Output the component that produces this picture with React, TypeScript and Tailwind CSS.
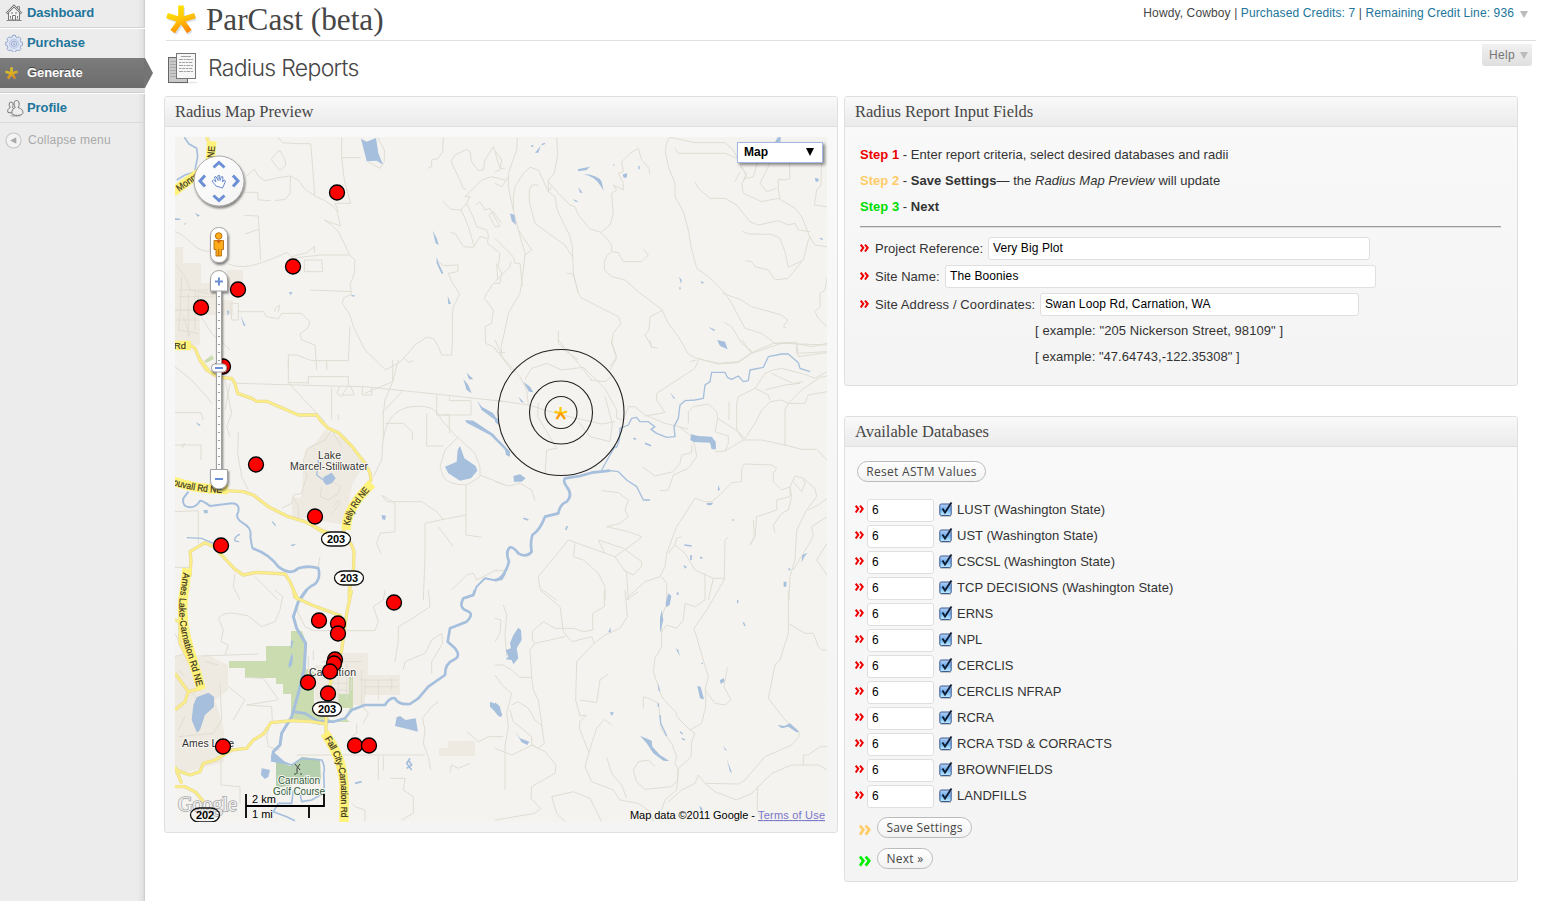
import React from "react";

const SANS = "font-['Liberation_Sans',Arial,sans-serif]";
const SERIF = "font-['Liberation_Serif',Georgia,serif]";

function Star({ id, className }: { id: string; className?: string }) {
  return (
    <svg viewBox="0 0 30 30" className={className}>
      <defs>
        <linearGradient id={id} gradientUnits="userSpaceOnUse" x1="6" y1="2" x2="16" y2="28">
          <stop offset="0" stopColor="#ffe600" />
          <stop offset="0.5" stopColor="#ffc60a" />
          <stop offset="1" stopColor="#ff8a00" />
        </linearGradient>
      </defs>
      <g transform="translate(1.2 1.4)" stroke="#9fb4cf" strokeOpacity=".4" strokeWidth="5.4">
        <path d="M15 15V1M15 15L1.5 11M15 15L28.5 11M15 15L7 27M15 15L23 27" />
      </g>
      <g stroke={`url(#${id})`} strokeWidth="5.6" fill="none">
        <path d="M15 16V.5M15 15L1 10.600M15 15L29 10.600M15.500 14L6.600 26.600M14.500 14L23.400 26.600" />
      </g>
    </svg>
  );
}

function HouseIcon() {
  return (
    <svg viewBox="0 0 18 18" className="h-[18px] w-[18px]">
      <path d="M3.500 8.500V16h11V8.500L9 3z" fill="#f4f4f4" stroke="#777" strokeWidth="1" />
      <path d="M12.500 2.500h2v4l-2-2z" fill="#ddd" stroke="#777" strokeWidth=".8" />
      <path d="M1.500 9.500L9 2l7.500 7.500" fill="none" stroke="#777" strokeWidth="2.400" />
      <path d="M1.500 9.500L9 2l7.500 7.500" fill="none" stroke="#eee" strokeWidth=".8" />
      <path d="M7.500 16v-4.500h3V16M6 9h2M10 9h2M5.500 12v2.500M12.500 12v2.500" fill="none" stroke="#777" />
      <path d="M1.500 16.500h15" stroke="#888" />
    </svg>
  );
}

function GearIcon() {
  return (
    <svg viewBox="0 0 18 18" className="h-[18px] w-[18px]">
      <g fill="#dfe6f5" stroke="#8d9fc6" strokeWidth=".9">
        <path d="M7.600 1.300h2.800l.5 1.700 1.500.6 1.600-.8 2 2-.8 1.600.6 1.500 1.700.5v2.800l-1.700.5-.6 1.500.8 1.600-2 2-1.600-.8-1.500.6-.5 1.700H7.600l-.5-1.700-1.500-.6-1.600.8-2-2 .8-1.600-.6-1.500-1.500-.5V8.400l1.500-.5.6-1.500L2 4.800l2-2 1.600.8 1.500-.6z" />
        <circle cx="9" cy="9.700" r="4.600" fill="#d3ddf2" stroke="#b4c2e2" />
        <circle cx="9" cy="9.700" r="2.600" fill="#eef2fb" />
        <circle cx="9" cy="9.700" r="1" fill="#ccd6ee" strokeWidth=".7" />
      </g>
    </svg>
  );
}

function UsersIcon() {
  return (
    <svg viewBox="0 0 18 18" className="h-[18px] w-[18px]">
      <ellipse cx="9.500" cy="16.800" rx="6" ry=".9" fill="#bbb" />
      <g fill="#ededed" stroke="#777" strokeWidth="1">
        <path d="M2 13.500c-1-2.500.5-4 2.200-5C2.500 6.500 2.800 3 5 3s2.800 3 1.500 5.200L9 12l-3 2z" />
        <path d="M9.300 8.500C7.500 6 7.500 1.500 10.500 1.500S14 6 12 8.500c3.500.8 5.500 3.500 4.800 6C15.500 17 7.500 17 6 14.800c-.8-2.500.8-5.500 3.300-6.300z" />
      </g>
    </svg>
  );
}

function ReportsIcon() {
  return (
    <svg viewBox="0 0 32 32" className="h-[32px] w-[32px]">
      <ellipse cx="17" cy="30.500" rx="14" ry="1" fill="#e6e6e6" />
      <rect x="1.500" y="5.500" width="19" height="25" fill="#c9c9c9" stroke="#666" />
      <path d="M3 9.500h6M3 12.500h6M3 15.500h6M3 18.500h6M3 21.500h6M3 24.500h6" stroke="#aaa" />
      <rect x="9.500" y="1.500" width="19" height="25" fill="#f7f7f7" stroke="#777" />
      <g stroke="#a2a2a2">
        <path d="M14 4.500h10" />
        <path d="M12 7.500h14M12 13.500h14M12 19.500h14" strokeDasharray="4 .7 2 .7" />
        <path d="M12 10.500h14M12 16.500h14" strokeDasharray="2.500 .7 3 .7" />
      </g>
    </svg>
  );
}

function MenuItem({ icon, label, className = "" }: { icon: React.ReactNode; label: string; className?: string }) {
  return (
    <a className={`flex items-center text-[13px] font-bold leading-[18px] tracking-[-0.08px] text-[#21759b] ${className}`}>
      <span className="flex w-[27px] shrink-0 items-center pl-[5px]">{icon}</span>
      <span>{label}</span>
    </a>
  );
}

function Sidebar() {
  return (
    <nav className="flex h-[901px] w-[145px] shrink-0 flex-col bg-[linear-gradient(to_right,#ececec_0,#ececec_137px,#e2e2e2_143px,#c8c8c8_145px)]">
      <MenuItem icon={<HouseIcon />} label="Dashboard" className="h-[28px] border-b border-[#d3d3d3] pb-[2px]" />
      <MenuItem icon={<GearIcon />} label="Purchase" className="h-[30px] border-t border-white pb-[2px]" />
      <div className="relative flex h-[30px] items-center bg-gradient-to-b from-[#7c7c7c] to-[#6c6c6c]">
        <span className="flex w-[27px] pl-[5px]">
          <Star id="starSmall" className="h-[13px] w-[13px] opacity-75" />
        </span>
        <span className="text-[13px] font-bold leading-[18px] tracking-[-0.1px] text-white [text-shadow:0_-1px_0_#444]">Generate</span>
        <svg viewBox="0 0 9 30" className="absolute left-[144px] top-0 h-[30px] w-[9px]">
          <path d="M0 0h1l8 15-8 15H0z" fill="#747474" />
        </svg>
      </div>
      <div className="h-[5px] border-b border-[#cfcfcf] bg-[#dfdfdf]" />
      <MenuItem icon={<UsersIcon />} label="Profile" className="h-[30px] border-b border-b-[#dadada] border-t border-t-white [&>span:first-child]:pl-[6px]" />
      <div className="flex h-[34px] items-center text-[12px] tracking-[0.22px] text-[#aaa]">
        <span className="flex w-[28px] pl-[5px]">
          <svg viewBox="0 0 18 18" className="h-[17px] w-[17px]">
            <circle cx="9" cy="9" r="8" fill="#f3f3f3" stroke="#c6c6c6" strokeWidth="1.200" />
            <path d="M12 5.500v7L5.500 9z" fill="#aaa" />
          </svg>
        </span>
        Collapse menu
      </div>
    </nav>
  );
}

function Panel({ title, className = "", children }: { title: string; className?: string; children: React.ReactNode }) {
  return (
    <section className={`w-[674px] shrink-0 overflow-hidden rounded-[3px] border border-[#dfdfdf] bg-gradient-to-b from-[#f9f9f9] to-[#f4f4f4] ${className}`}>
      <h3 className={`h-[30px] border-b border-[#dfdfdf] bg-gradient-to-b from-[#f9f9f9] to-[#ebebeb] pl-[10px] text-[16.5px] leading-[30px] text-[#464646] ${SERIF}`}>
        {title}
      </h3>
      {children}
    </section>
  );
}

const Tile = ({ x, y, d }: { x: number; y: number; d: string }) => (
  <path d={d} transform={`translate(${x} ${y}) scale(.33333)`} />
);

const ROADS: [number, number, string][] = [
  [165, 130, `M340,22L352,38 395,41 437,41 443,110 449,195M318,88L335,68 345,62 360,90 362,105 345,122 318,88M245,138L268,118 280,138 300,152 340,143 375,138 400,150 420,178 450,198 480,212 505,230 515,242 527,288 505,280 478,270 500,285 520,305 540,345 553,373 570,390 568,430 555,465 560,492 535,505 532,520 555,555 565,590 600,660 662,720M377,138L375,190 362,208 330,212
M530,22V83H588M530,83L538,150 557,220H510L520,245M638,22L658,60 658,95 645,115 608,95M835,22L833,65 820,85 800,90 800,110 790,115M1020,115L1005,115 985,50 960,90 955,120 940,122 920,95 915,65 905,58 870,75 858,95 880,140 895,175 905,178M833,213L858,238 888,240 905,220 925,262 935,290 965,300 970,315 968,340 1005,370 1000,410 1010,430 1005,460 985,460 965,490 958,505 985,540 980,580 960,590 962,640 985,650 1000,668H1020M888,240L900,265 910,290 928,350M857,308L870,310 895,350 925,352 945,320 966,325
M905,220L915,200 900,200 950,150 980,140 1020,150M932,225L945,215 960,240 975,235 1005,290 990,290 972,255 985,245 1010,280M820,395L835,407 880,405 878,425 850,430 860,455 884,492 865,530 862,560V640L860,675 830,675 820,650 805,625 785,622 750,645 720,680 700,700 660,720M718,685L730,697 745,692M238,187H278L280,210 318,212M238,256L280,258 287,392M240,312L282,298M190,402Q230,420 290,398T365,367L385,385 420,380 470,375 553,375M418,390L470,390 473,425H418zM380,380L425,368 448,350V368M435,480L560,485M30,305Q50,310 80,340T140,362
M220,545H295L305,560 340,566 350,550 410,550 435,575 430,592 405,612 410,630 450,645 455,720M370,720V675H395L440,692H550L555,590M330,545L330,535 345,525 340,545M197,520H220V570H200zM30,400L60,440 75,480 130,490M40,480H130M40,500H150M30,540H100M50,440L45,560 40,600M70,490V620M90,480V600M30,570H100M40,600L100,610M55,560L75,620M108,560L140,610 175,640 195,660M100,490V540H30`],
  [165, 360, `M30,20L80,60 125,110 140,130M30,158H108L115,180M215,70L500,78 600,80 820,103 1020,125M370,0V68L400,100 460,165 480,185M500,178V82M485,30L485,0M430,72V50H550V75L530,110 515,100 525,78M555,75L568,105 530,105M592,80V105H620V83M683,0V65L660,120 655,160V230L650,300 625,350M655,240Q665,150 740,140T830,180L870,225 930,280 945,320V350L905,375Q850,375 835,350L825,320 840,270 880,230M662,190H715L742,215V240M785,160V258H835M815,106V165L853,165V220M853,110V122H918V165H830M945,345L1020,375M903,375V525L950,532
M650,405L665,425H740 770L815,455 835,478 905,465M835,478L780,490V590L775,720M650,405L690,430V515L645,520 635,550 648,582M820,500L850,540 865,560M860,690L905,645 925,640 935,660 990,632H1020M30,455L100,452V550M180,60L200,160 185,200 195,230M195,70L180,150M220,215L218,280 230,350 250,390M30,255H108V300M48,260L60,250 52,265M210,640L205,680 225,720M270,650L310,690 340,720M430,265L480,240 500,210M430,265L415,300 425,350 410,400 385,405 380,430 350,445M500,210L530,260M470,380L465,410 490,420 520,400 525,380 505,365M505,440L520,420 525,430 500,460
M385,410L400,440V475M30,622H75M465,590L460,620 420,625M520,165V180M370,68H430M715,90L650,160M600,100L683,65 700,0`],
  [165, 590, `M160,85Q175,65 210,70L250,78 290,110 330,95 345,60 353,20 330,0M110,198L280,192M395,50L400,70 420,110 445,122H630L640,95 625,50 655,30 660,0M790,0L795,50 735,90 700,110V150L690,215M715,240L720,215 780,190 800,150 830,130 833,160 800,215 800,250M160,85L175,120 168,155 190,165 180,195M240,262L295,265 340,328M245,345L338,330M245,345L320,350 322,395M315,400L305,440 310,470 345,480M395,495H780M790,500L797,540M790,500L775,460 780,420 772,385 800,350 820,335M168,495V585L225,590V640M675,565H720L715,600 745,620V670L710,690M560,640L570,650 600,660 600,695M905,425L940,455 970,440 1015,440M855,548L860,525 880,535 915,520
M640,500V570M655,500V540M430,200V260M445,180V210M470,215H590M500,240H560V300M520,220V330M545,220V330M500,260H580M500,280H560M510,300H560M580,270H700M600,265V320M640,270V330M680,265V300M600,290H700M590,240V350M575,400V430L560,440M590,345L610,370 595,400M30,130L60,190 30,200M120,215L160,225M30,255L100,330M165,280L170,390 145,430 40,440M60,380L40,420M40,240L60,260M190,290L240,330 205,390`],
  [495, 130, `M67,22L65,60 40,130V170L50,220 70,300 90,370 85,420 75,490 40,550 30,600 18,650 20,668M185,22L188,75 178,130 160,150V185L180,200 187,240 225,320 232,350 235,430 250,490 258,503 330,540 370,560 378,580 355,610 350,640 365,685 345,720M160,155L190,190 225,225 240,230 250,255 285,297 318,307 330,320 350,345V365L335,378 328,395V420L350,440 390,450 430,485 460,508 500,538 520,580 550,620 580,672 605,685 670,700 730,695 770,668 835,640 900,640 950,650 996,640M55,240L55,200 60,170 85,130 105,112 130,120 160,185 170,170M130,165L110,165 103,180V215L120,280 160,310 210,345 235,385M318,307L345,285 355,250 350,190 365,180 355,165 385,180 385,160 370,130 385,125 380,95 405,70 430,55 440,90 462,115 465,133
M350,365L370,368 385,395 440,395 460,375 445,357M215,430L235,432 250,490M505,540L465,560 462,600 450,615 470,650 488,655M70,300L110,360 90,375M0,325L55,380 60,400 75,400 82,470M0,455L45,410 48,395M5,400L8,450M0,62L20,90 15,120 0,125M0,160L20,170 40,140M525,22Q510,40 512,70L520,110 540,160V200L565,245 580,300 588,350 605,415 640,440 690,490 710,520 750,595 800,610 840,640 905,636M525,22L600,38 690,38 715,60 735,100 755,140 740,160 745,190 800,215 850,205 900,235 920,260 945,322 960,345 996,350
M540,55L550,70H690L725,85M755,145L775,140 790,90M883,90L885,145 870,150 850,148 850,180 855,205M800,165L795,160 830,90M800,165L815,185 845,175M600,155L610,175 645,205H690L725,225 765,275 790,285 850,272 880,285 900,280 910,300 945,305M743,303L760,312 830,313 855,325 870,365 880,412 925,390 940,330 945,322M750,392L770,395 780,410 820,420 840,450 880,445 920,395M980,80L978,165 965,180 958,225 996,230M996,445L990,480 975,490V530L960,545 970,565 996,590M682,490L735,508 770,530 860,555 878,570 865,590 875,595M688,577L710,590 740,640 772,665M905,640L910,680 996,668M190,603V640L215,665 250,690M0,655L50,720M735,125L720,155M745,150L755,130 735,110`],
  [495, 340, `M0,0L25,55 75,110 95,150 100,195M90,118L110,85 155,70 200,90 265,82 330,145 365,210V235L385,240 400,200 420,200 450,225 510,250 560,262 580,268M0,180L100,195 200,225 320,252 360,245M285,120L330,125 350,110M190,0L215,30 250,70 290,120M130,190L128,230 185,325 155,330 150,405M250,245L285,290 345,305 352,250 330,170M348,0L365,50 345,80M610,60L600,85 485,160V180L510,218 450,228M465,0L470,25M605,60L585,65M605,55L670,72 730,68 770,40 860,10 996,15M770,40L740,0M905,10V40L996,35
M996,95L960,115 935,105 860,85 835,90 810,100 780,145 730,170 725,190V270L745,300 690,333 660,335M555,262L590,290 600,320 605,350 580,385 535,405 520,450 495,452M590,315V338L560,345 555,370 535,395 480,408 442,380M580,250V215L595,200 640,192 665,215 668,235 730,275 748,295M668,235L660,275 700,288V310L690,333M702,185V240M745,300H800L870,315 920,328 965,328 996,360M748,298L780,250 800,210 825,185 860,180 880,190 870,210V318M880,190L920,150 975,112 996,108M780,145L820,165 825,180M830,100L860,115 895,130 925,125M810,150L870,135 915,130M880,190L930,190 940,165 996,155
M845,385L830,375 748,372 740,385V425L710,428 680,460 650,485H630L600,475 545,560 530,600 515,640 510,680 495,710 450,725 400,770 395,780M845,385L835,400V425L860,450 885,440 885,470 845,480V510L785,530 780,590 765,615M885,440L900,408 925,415 960,445 965,470 935,510 905,570 900,660 885,710 882,780M885,440L890,470 880,510 860,520 835,555 840,578M925,415L930,430 920,455 895,425M996,475L970,495 940,510M996,530L950,560 955,590 925,640 895,690M996,610L965,660 996,705M775,540L778,590 765,615M220,600L130,710 135,745 185,780M220,600L360,650 395,700 400,780M240,610L235,650 265,660 310,700 330,740V780M310,600L385,625 440,665V680L415,705 385,690M310,600L330,640M360,650L430,600 440,590 400,575 335,560 375,550 400,530 390,510 400,480 370,458 320,452M700,590L690,600 688,715 655,715 600,690 570,640 540,615 520,640M630,700V780M655,715L640,780M560,590L545,595 540,615M500,710L515,730V780M0,425L40,438 75,430 110,450 120,482M690,715L670,750M0,690H5M640,655`],
  [495, 590, `M135,0L195,50 205,125 230,155 290,140 297,160 245,215 242,330 255,378 275,375 255,395 253,415 283,490M328,0V50L293,70V120L265,125 235,115H180L145,95 112,125V150L120,160 105,180 110,260 115,300 130,330 148,460 130,475 113,465 50,495 0,475M120,160L210,140M390,0L397,80 375,115 330,135 297,160M397,28L430,5M255,330L305,338 315,270 340,252M25,45L35,75 30,130 35,200M0,85L18,90 15,130 0,155M0,225L25,225 50,240 75,262 110,262M0,255L25,290 50,310 35,370 40,410 30,470 30,600M50,345L70,335 100,355 120,390 143,410M45,360L55,395 110,440 110,465 150,485 183,525 180,550 110,590 108,625 137,655 120,670 0,690M330,390L350,405M330,385L305,415 290,460 270,530 290,575 355,600 375,630 430,640 465,665 475,695M335,502L350,550 380,585 395,625M320,695L285,625 235,605 170,620 185,670 210,695
M515,0V40L500,80V170L480,205 475,245 500,320 545,370V380L585,420 600,430 590,455 588,500 548,538V570L530,590 450,598 425,575 415,540 430,515 460,510 480,530M445,355L445,320 460,325 490,340 500,420 530,460 545,500 540,520 550,538 545,600 510,630 500,660M500,125L515,105 545,115 565,90 570,40 600,50 630,30M670,0L635,60 597,115 640,260 630,300 660,340 690,345 708,330 687,290 697,232M632,298V350L620,400 585,420M880,0V130L855,210 840,225 820,325 870,390 912,425V440L890,465 810,500 750,570 730,582 630,580 610,555 600,580 560,600 520,635M630,580L660,605 725,630 770,610 830,550 890,525H970L996,540M925,525V495H940L975,470H996M787,590V660L800,690M880,100L930,130 955,130 970,170 980,180H996`],
];

const WATER_FILL: [number, number, string][] = [
  [165, 130, `M588,26L605,35 633,24 640,70 654,104 635,92 605,94zM803,302L815,325 821,345 812,340zM815,380L821,400 835,430 830,432 815,400zM848,498L858,522H850zM30,265L46,266V270H30zM90,248L105,257 98,260zM56,282L64,279 60,284zM227,558L242,587H236zM372,486L383,487 376,496zM556,495L570,496 566,501zM186,540L194,545 188,557z`],
  [165, 360, `M885,258L898,295 932,318 937,332 918,355 885,362 850,340 840,320 875,305 878,270zM475,352L500,338 512,355 500,370 485,375 475,365zM895,57L910,75 920,100 905,90zM905,38L925,58 912,58zM900,180L925,182 985,222 1018,260 1012,260 975,225 905,188zM937,122L950,140 985,160 1000,185 990,180 950,150zM115,450H128V460H118zM650,465L663,467 660,480 652,478zM92,186L107,195 102,198zM375,555L393,551 385,559z`],
  [165, 590, `M95,322L130,308 147,320V350L120,375 105,420 96,428 80,390 85,345zM378,150L385,155 380,175 377,175zM380,190L384,200 381,225 372,235 370,225zM695,382L705,378 722,390 752,385 759,425 730,418 690,408zM975,335L1000,345 1012,375 1005,380 975,350zM290,535L315,540 310,560 300,567 288,555zM318,495L330,490 360,515 380,525 345,520 320,515z`],
  [495, 130, `M45,250L58,255 63,285 50,272zM248,118L285,110 275,120 250,124zM265,132Q310,135 320,155L326,182 315,165Q300,140 265,132zM120,68L137,48 130,68zM250,172L263,188 255,188zM232,207L250,214 243,216zM383,133L397,130 395,143 386,143zM848,22H858L856,37H840zM960,143L972,147 968,157 961,153zM552,440L560,450 558,462zM640,590L662,600 655,602zM667,630L690,635 698,658 672,642zM617,453L628,458 620,461z`],
  [495, 340, `M668,0L698,28 675,18zM588,283L610,288 650,290 662,305 663,328 650,328 645,308 595,306 586,300zM55,408L75,403 92,415 80,425H57zM85,125L105,140 115,157 102,155zM70,170L88,188 78,185zM0,230L12,240 10,255 0,245zM0,290L20,308 45,335V350L33,345 30,330 0,298zM525,157L542,178 535,175zM635,489L655,488 648,496 636,495zM670,435L675,450 668,452zM565,675L576,680 570,686zM920,668L922,645 938,638 928,650zM866,725H874V740H866z`],
  [495, 590, `M70,113L78,120 80,150 65,175 70,205 55,223 50,210 32,208 40,200 32,180 48,175 45,160 55,135zM0,337L15,350 20,380 10,378 0,365zM60,423L75,445 103,455 97,465 80,457zM435,437L470,452 472,470 495,495 523,513 505,512 475,490 455,460zM607,288L617,290 627,328 615,325zM675,270L687,265 688,275 677,282zM542,175L550,180 555,200zM520,10L529,18 524,45 514,52 512,40zM495,85L500,60 505,90 495,130zM340,125L347,112 347,128zM848,405L868,408 885,400 912,425 905,427 880,410 860,415zM685,468L696,482 690,480zM695,505L700,520 711,548 705,545zM612,647L622,655 620,668zM345,367L357,367 350,378zM490,280L496,305 490,300z`],
];

const PINS: [number, number][] = [
  [337, 192], [293, 266], [238, 289], [201, 307], [223, 366], [256, 464], [315, 516], [221, 545], [394, 602], [319, 620],
  [338, 623], [338, 633], [335, 659], [334, 663], [330, 671], [308, 682], [328, 693], [223, 746], [355, 745], [369, 745],
];

const YELLOW: [number, number, string][] = [
  [165, 130, `M125,22L140,60V90M30,190L90,135 110,115M30,646L75,645 90,655 105,690 130,720`],
  [165, 360, `M105,0L125,30 160,52 200,55 210,70 218,100 260,115 275,124H305L400,165H455L470,185 490,205 520,218 560,258 600,310 615,340 618,360 590,400 550,450 545,490 535,515M30,362L60,378 130,385 180,392 235,395 265,405 310,440 370,470 420,485 480,515 540,530 560,555 567,575 565,640 553,690V720M75,650L78,600 75,575 100,560 120,548 150,562 165,580 210,628 235,645 275,637 360,642 375,665 390,700 400,720M430,490L480,520`],
  [165, 590, `M30,250L70,305 110,295M70,305L60,335 30,360M385,0L390,22 440,45 530,78M560,0L545,70 530,180 500,260 483,350V430L520,500 535,560 540,695M483,402L440,395 380,392 318,398 295,432 265,450 245,475 200,480 150,510 115,520 105,545 75,555 45,545 30,535M30,590H60L90,605 120,640M45,30V160L110,290M30,90L45,95M30,530L50,580`],
];

const RIVERS: [number, number, string, number][] = [
  [165, 130, `M58,22L72,42 95,55 98,80 92,110 90,125 60,135 35,150`, 5],
  [165, 360, `M70,395L55,415Q50,440 75,442Q95,442 105,422Q115,422 135,438L200,430Q225,430 220,455Q208,475 235,490Q262,505 256,530L262,565M1020,640L1010,658 985,660 960,655 935,680 925,705 900,715`, 6],
  [165, 360, `M262,565Q310,580 340,620Q375,648 400,625Q430,615 460,625Q468,655 450,672Q420,685 405,720`, 8],
  [165, 360, `M65,533L110,535 145,550M460,300L455,345 475,360M222,545Q205,545 210,535T225,523M470,315L460,305M322,485L332,497`, 4],
  [165, 590, `M425,0L400,35 385,80 395,115 422,160 418,235 400,310 380,380 350,430 345,465 325,485 322,515`, 9],
  [165, 590, `M385,365L420,370 460,395 505,395 540,385 560,360 600,345 660,345 Q675,320 690,325Q700,345 735,342L760,325 790,290 840,255 Q840,220 865,210T870,175L848,155 855,115 905,95Q930,70 905,62T895,25L925,15 930,0`, 8],
  [165, 590, `M325,490L350,515 380,525 410,505 470,510Q482,530 476,550L478,595M405,610L410,635 440,630 475,610M385,600L380,640 340,640 325,665 365,680 390,692M735,505L725,520 740,540M570,580L590,575M730,510L740,525 725,535`, 5],
  [495, 340, `M0,722Q28,715 42,665Q30,635 45,622Q55,620 70,640Q95,655 110,635Q105,610 112,585Q135,570 150,530Q170,525 190,520Q195,492 215,485Q235,465 215,440Q203,425 210,415L255,408 290,398 345,392`, 8],
  [495, 340, `M320,390L345,345 360,320 365,322 373,300 375,265 400,255 410,235 425,232 435,245 460,245 480,260 468,268 485,280 515,292 540,290 537,260 550,235 555,195 570,182 600,180 625,175 630,135 645,125 650,97 690,97 697,112 710,118 730,108 745,125 760,122 765,90 805,82 820,50 860,42 880,42 910,68 915,85 945,95M345,392L370,395 395,420 425,440 445,480 465,480`, 4],
  [495, 590, `M490,340V350M495,375L497,400 515,438M555,425L563,432M560,445L570,450M728,30V40M745,97L750,108M620,220H624`, 4],
  [495, 130, `M975,325L983,328M108,48H115M140,44L150,40M355,105H358M432,108V118M555,472V478`, 4],
  [495, 340, `M85,535L100,540M217,558L212,570M450,310L468,317M568,615L590,618M588,645V660M615,652L622,655M548,757V765M523,765V780M712,540H716M880,688H886M415,295L423,298`, 5],
];

const ROAD_LABELS: { id: string; d: string; length: number; text: string }[] = [
  { id: "ames", d: "M186.500 573L183 600Q181 622 189 648T200 685", length: 115, text: "Ames Lake-Carnation Rd NE" },
  { id: "duvall", d: "M174 481.500Q195 489 223 489.500", length: 49, text: "ouvall Rd NE" },
  { id: "kelly", d: "M346.500 525Q348 508 368.500 487", length: 43, text: "Kelly Rd NE" },
  { id: "fall", d: "M327.500 737Q343 760 344 785V820", length: 84, text: "Fall City-Carnation Rd" },
  { id: "monroe", d: "M177 189L202 171", length: 30, text: "Monroe" },
  { id: "rd", d: "M174 345.500H186", length: 12, text: "Rd" },
  { id: "ne", d: "M210.500 158L211.500 146", length: 12, text: "NE" },
];

function MapCanvas() {
  return (
    <svg viewBox="175 137 652 685" className="block h-[685px] w-[652px] font-['Liberation_Sans',Arial,sans-serif]">
      <defs>
        <linearGradient id="knob" x1="0" x2="1" y1="0" y2="1">
          <stop offset="0" stopColor="#fff" />
          <stop offset="1" stopColor="#f3f3f3" />
        </linearGradient>
        <filter id="drop" x="-20%" y="-20%" width="150%" height="150%">
          <feDropShadow dx="1" dy="2" stdDeviation="1" floodColor="#000" floodOpacity=".5" />
        </filter>
      </defs>
      <rect x="175" y="137" width="652" height="685" fill="#f4f3ef" />

      <g fill="#efeae1">
        <path d="M175 247H183V263H201V283H218V300H233V315H200V345H175zM227 270H243V288H227z" />
        <path d="M325 430L348 441 364 465 352 485 345 525 305 518H292V498H301L305 450 316 442z" />
        <path d="M175 655L208 655 228 665V690L215 700 224 730V762L175 775z" />
        <path d="M315 665H335V653H368V675H400V695H365V705H352L330 700H315z" />
        <path d="M448 741H475V756H439V748H448z" />
      </g>
      <g fill="#cadcb0">
        <path d="M229 661H266V646H291V631H302L307 645 300 690 292 722H291V694H283V684H276V678H245V668H229z" />
        <path d="M304 668L314 672V703L332 722H350L345 718 350 708H338V694H349V677H353V708L344 720 320 725 291 718z" />
        <path d="M204 361L212 355 214 359 206 363z" />
      </g>
      <path d="M276 760L290 766 302 757 320 759 321 780 276 788z" fill="#b5d0ae" />
      <g stroke="#dfddd3" strokeWidth="3" fill="none" strokeLinejoin="round">
        {ROADS.map(([x, y, d], i) => <Tile key={i} x={x} y={y} d={d} />)}
      </g>
      <g fill="#a5bfdd">
        {WATER_FILL.map(([x, y, d], i) => <Tile key={i} x={x} y={y} d={d} />)}
      </g>
      <g stroke="#a5bfdd" fill="none" strokeLinejoin="round">
        {RIVERS.map(([x, y, d, w], i) => (
          <path key={i} d={d} strokeWidth={w} transform={`translate(${x} ${y}) scale(.33333)`} />
        ))}
      </g>
      <g stroke="#e6d795" strokeWidth="10" fill="none" strokeLinejoin="round">
        {YELLOW.map(([x, y, d], i) => <Tile key={i} x={x} y={y} d={d} />)}
      </g>
      <g stroke="#fbee87" strokeWidth="6.500" fill="none" strokeLinejoin="round">
        {YELLOW.map(([x, y, d], i) => <Tile key={i} x={x} y={y} d={d} />)}
      </g>

      {ROAD_LABELS.map(({ id, d, length, text }) => (
        <g key={id}>
          <path id={id} d={d} fill="none" stroke="#fff27a" strokeWidth="9.500" strokeLinecap="square" />
          <text fontSize="9.500" fill="#3a3420" stroke="#3a3420" strokeWidth=".2" dy="3.400">
            <textPath href={`#${id}`} textLength={length} lengthAdjust="spacingAndGlyphs">{text}</textPath>
          </text>
        </g>
      ))}

      <g fontSize="10.500" fill="#333" stroke="#f7f5f0" strokeWidth="2" paintOrder="stroke" lengthAdjust="spacingAndGlyphs">
        <text x="318" y="459" textLength="23">Lake</text>
        <text x="290" y="470" textLength="78">Marcel-Stillwater</text>
        <text x="309" y="676" textLength="47">Carnation</text>
        <text x="182" y="747" textLength="52">Ames Lake</text>
        <g fill="#2e5c3c" fontSize="10">
          <text x="278" y="784" textLength="42">Carnation</text>
          <text x="273" y="795" textLength="52">Golf Course</text>
        </g>
      </g>
      <path d="M295 764l5 6M300 764l-3 4v6M294 774h2M300 774h2" stroke="#444" fill="none" />

      <g fill="none" stroke="#222" strokeWidth="1.100">
        <circle cx="561" cy="412.500" r="63" />
        <circle cx="561" cy="412.500" r="31.500" />
        <circle cx="561" cy="412.500" r="16" />
      </g>
      <g strokeWidth="2.300">
        <path d="M560.500 413.500V407M560.500 413.500L554.500 411.500M560.500 413.500L567 411.500" stroke="#ffc800" />
        <path d="M560.500 413L556.500 419M560.500 413L565 419" stroke="#ff9a0a" />
      </g>

      <g fill="#f00" stroke="#000" strokeWidth="1.300">
        {PINS.map(([x, y], i) => <circle key={i} cx={x} cy={y + 0.5} r="7.500" />)}
      </g>

      <circle cx="219" cy="181" r="25" fill="url(#knob)" stroke="#999" strokeWidth=".8" filter="url(#drop)" />
      <g fill="none" stroke="#6a8fd4" strokeWidth="3">
        <path d="M213.500 167.500l5.500-5 5.500 5M213.500 195.500l5.500 5 5.500-5M205 175.500l-5 5.500 5 5.500M233 175.500l5 5.500-5 5.500" />
      </g>
      <path d="M216 186l-4-5 1.500-1 2.500 2-1.500-5 1.500-.5 2 4 0-5 1.500 0 .5 5 1.500-4 1.500.5-.5 5 1.500-2 1.500 1-2 5-1 2z" fill="#fff" stroke="#5b7fc6" strokeWidth=".9" />

      <g fill="#fff" stroke="#999" strokeWidth=".9" filter="url(#drop)">
        <rect x="210.500" y="227.500" width="17" height="35" rx="8" />
        <rect x="216.500" y="290" width="5" height="182" />
        <path d="M210.500 291V279a8.500 8.500 0 0117 0v12z" />
        <path d="M210.500 469.500v11a8.500 8.500 0 0017 0v-11z" />
        <rect x="211.500" y="364" width="15" height="8" rx="3.500" />
      </g>
      <path d="M219 296V362M219 376V466" stroke="#999" strokeWidth="2" strokeDasharray="1 7" />
      <path d="M215 281.500h8M219 277.500v8M215 479h8M215 368h8" stroke="#6a8fd4" strokeWidth="2" />
      <g fill="#fdac1c" stroke="#b56b0c" strokeWidth=".9">
        <path d="M214 240.500h9.500v9h-2v6.500h-5.500v-6.500h-2zM218.700 249v7" />
        <circle cx="218.700" cy="236" r="3.300" />
      </g>
      <path d="M216 240.500h5.500l-2.700 3z" fill="#d9611b" />

      <text x="178" y="811" fontSize="20" textLength="59" fill="#f2f2f2" stroke="#a8a8a8" strokeWidth="1.600" paintOrder="stroke" className="font-['Liberation_Serif',serif]">Google</text>
      {([[336, 539], [349, 578], [327, 709], [205, 815]] as [number, number][]).map(([x, y]) => (
        <g key={`${x}-${y}`}>
          <rect x={x - 14.5} y={y - 7} width="29" height="14" rx="9" ry="7" fill={y === 815 ? "none" : "#fff"} stroke="#111" strokeWidth="1.300" />
          <text x={x} y={y + 4} textAnchor="middle" fontSize="11" fontWeight="bold" fill="#000" textLength="18">
            {y === 815 ? "202" : "203"}
          </text>
        </g>
      ))}
      <path d="M246 794v24M246 806h78v-12M309 806v12" fill="none" stroke="#000" strokeWidth="1.800" />
      <g fontSize="11" fill="#000">
        <text x="252" y="803">2 km</text>
        <text x="252" y="818">1 mi</text>
        <text x="630" y="819" textLength="125">Map data ©2011 Google -</text>
        <text x="758" y="819" textLength="67" fill="#7777cc" textDecoration="underline">Terms of Use</text>
      </g>
    </svg>
  );
}

function Chevrons({ className = "", large = false }: { className?: string; large?: boolean }) {
  return (
    <svg viewBox="0 0 9 8" className={`shrink-0 ${large ? "h-[12px] w-[12px]" : "h-[8px] w-[9px]"} ${className}`}>
      <path d="M.7.700L3.300 3.900.7 7.500M5 .700L7.700 3.900 5 7.500" fill="none" stroke="currentColor" strokeWidth="2" />
    </svg>
  );
}

function Field({ label, value, labelClass, inputClass }: { label: string; value: string; labelClass: string; inputClass: string }) {
  return (
    <label className="flex h-[28px] items-center">
      <Chevrons className="mr-[6px] text-[#e00]" />
      <span className={`shrink-0 whitespace-nowrap pt-[2px] ${labelClass}`}>{label}</span>
      <input
        defaultValue={value}
        className={`h-[23px] rounded-[3px] border border-[#dfdfdf] bg-white px-[4px] pb-px text-[12px] tracking-[0.1px] text-black outline-none ${inputClass}`}
      />
    </label>
  );
}

function CheckMark() {
  return (
    <svg viewBox="0 0 14 16" className="h-[16px] w-[14px] shrink-0">
      <defs>
        <linearGradient id="aqua" x1="0" y1="0" x2="0" y2="1">
          <stop offset="0" stopColor="#b5cff2" />
          <stop offset=".5" stopColor="#6fb0f0" />
          <stop offset="1" stopColor="#c3f0ff" />
        </linearGradient>
      </defs>
      <path d="M1.500 15.300h10.500" stroke="#bbb" />
      <rect x=".8" y="3" width="11.400" height="11.500" rx="1.500" fill="url(#aqua)" stroke="#3d5a93" />
      <path d="M3.500 7.500L6 11.500 12.500 1.500" fill="none" stroke="#111c33" strokeWidth="1.900" />
    </svg>
  );
}

const DATABASES = [
  "LUST (Washington State)", "UST (Washington State)", "CSCSL (Washington State)", "TCP DECISIONS (Washington State)",
  "ERNS", "NPL", "CERCLIS", "CERCLIS NFRAP", "RCRA", "RCRA TSD & CORRACTS", "BROWNFIELDS", "LANDFILLS",
];

function PillButton({ className = "", children }: { className?: string; children: React.ReactNode }) {
  return (
    <button className={`h-[21px] whitespace-nowrap rounded-full border border-[#bbb] bg-gradient-to-b from-white to-[#f2f2f2] text-center text-[12px] leading-[18px] text-[#464646] font-['Open_Sans','Noto_Sans',sans-serif] ${className}`}>
      {children}
    </button>
  );
}

export default function App() {
  return (
    <div className={`flex h-[901px] w-[1546px] overflow-hidden bg-white text-[#333] ${SANS}`}>
      <Sidebar />
      <main className="flex flex-1 flex-col pl-[19px]">
        <header className="ml-[2px] flex h-[41px] w-[1370px] border-b border-[#dfdfdf]">
          <Star id="starBig" className="mt-[5px] h-[30px] w-[30px]" />
          <h1 className={`ml-[10px] mt-[2px] text-[31.200px] leading-[36px] text-[#464646] ${SERIF}`}>ParCast (beta)</h1>
          <div className="ml-auto mr-[8px] flex h-[26px] items-center whitespace-pre text-[12px] tracking-[0.12px] text-[#464646]">
            <span>Howdy, Cowboy | </span>
            <a className="text-[#21759b]">Purchased Credits: 7</a>
            <span> | </span>
            <a className="text-[#21759b]">Remaining Credit Line: 936</a>
            <span className="ml-[6px] mt-[3px] border-x-[4px] border-t-[7px] border-x-transparent border-t-[#bbb]" />
          </div>
        </header>

        <div className="flex h-[55px]">
          <div className="ml-[3px] mt-[11px]"><ReportsIcon /></div>
          <h2 className="ml-[9px] mt-[9px] text-[23px] font-light leading-[36px] tracking-[-0.7px] text-[#464646] font-['Inter',sans-serif]">Radius Reports</h2>
          <div className="ml-auto mr-[14px] mt-[3px] flex h-[22px] w-[50px] items-center rounded-b-[3px] bg-gradient-to-b from-[#f1f1f1] to-[#dfdfdf] pl-[7px] text-[12px] tracking-[0.3px] text-[#777]">
            Help
            <span className="ml-[5px] border-x-[4px] border-t-[7px] border-x-transparent border-t-[#bbb]" />
          </div>
        </div>

        <div className="flex items-start gap-[6px]">
          <Panel title="Radius Map Preview" className="h-[737px]">
            <div className="relative ml-[10px] mt-[10px] w-[652px]">
              <MapCanvas />
              <div className="absolute right-[4px] top-[5px] flex h-[21px] w-[86px] items-center justify-between border border-[#a3b8e3] bg-white pb-px pl-[6px] pr-[8px] text-[12px] font-bold text-black shadow-[2px_2px_3px_rgba(0,0,0,0.45)]">
                Map
                <span className="border-x-[4px] border-t-[8px] border-x-transparent border-t-black" />
              </div>
            </div>
          </Panel>

          <div className="flex flex-col gap-[30px]">
            <Panel title="Radius Report Input Fields" className="h-[290px]">
              <div className="pl-[15px] pt-[15px] text-[13px] leading-[26px] tracking-[0.03px]">
                <p><b className="text-[#e00]">Step 1</b> - Enter report criteria, select desired databases and radii</p>
                <p><b className="text-[#fc6]">Step 2</b> - <b>Save Settings</b>— the <i>Radius Map Preview</i> will update</p>
                <p><b className="text-[#0d0]">Step 3</b> - <b>Next</b></p>
                <div className="mb-[6px] mt-[6px] h-[2px] w-[641px] border-b border-t border-b-[#ddd] border-t-[#999]" />
                <Field label="Project Reference:" value="Very Big Plot" labelClass="w-[113px]" inputClass="w-[382px]" />
                <Field label="Site Name:" value="The Boonies" labelClass="w-[70px]" inputClass="w-[431px]" />
                <Field label="Site Address / Coordinates:" value="Swan Loop Rd, Carnation, WA" labelClass="w-[165px] tracking-[0.1px]" inputClass="w-[319px]" />
                <p className="pl-[175px] tracking-[0.08px]">[ example: "205 Nickerson Street, 98109" ]</p>
                <p className="pl-[175px]">[ example: "47.64743,-122.35308" ]</p>
              </div>
            </Panel>

            <Panel title="Available Databases" className="h-[466px]">
              <div className="flex h-[35px] pl-[12px] pt-[14px]">
                <PillButton className="w-[129px] tracking-[0.3px]">Reset ASTM Values</PillButton>
              </div>
              <ul className="mt-[15px] pl-[9px]">
                {DATABASES.map((name) => (
                  <li key={name} className="flex h-[26px] items-center text-[13px] tracking-[0.03px]">
                    <Chevrons className="mb-[3px] ml-[0.500px] mr-[3.500px] text-[#e00]" />
                    <input defaultValue="6" className="h-[23px] w-[67px] rounded-[3px] border border-[#dfdfdf] bg-white px-[4px] text-[12px] text-black outline-none" />
                    <span className="mb-[3px] ml-[5px]"><CheckMark /></span>
                    <span className="ml-[4px] pb-px">{name}</span>
                  </li>
                ))}
              </ul>
              <div className="mt-[8px] flex h-[21px] pl-[14px]">
                <Chevrons large className="mr-[6px] mt-[7px] text-[#fc6]" />
                <PillButton className="w-[95px] tracking-[0.2px]">Save Settings</PillButton>
              </div>
              <div className="mt-[10px] flex h-[21px] pl-[14px]">
                <Chevrons large className="mr-[6px] mt-[7px] text-[#0e0]" />
                <PillButton className="w-[56px] tracking-[0.3px]">Next »</PillButton>
              </div>
            </Panel>
          </div>
        </div>
      </main>
    </div>
  );
}
